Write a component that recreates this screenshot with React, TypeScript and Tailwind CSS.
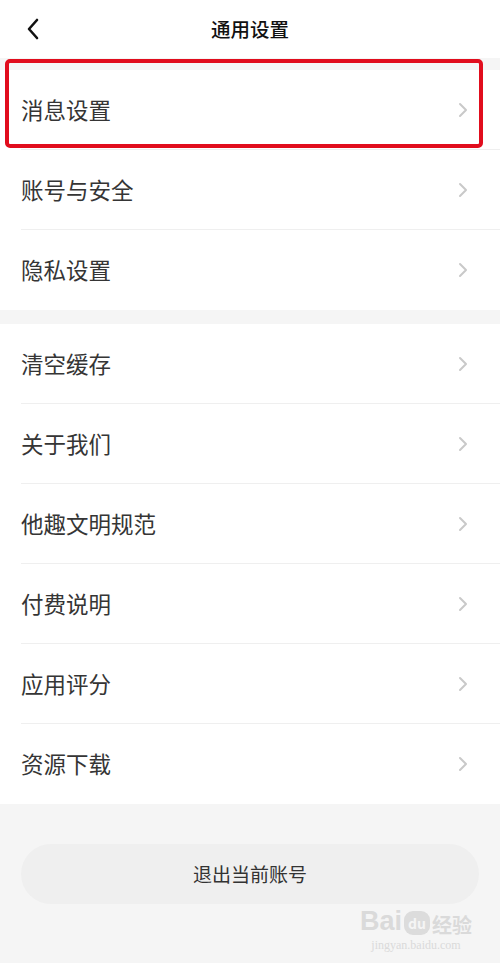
import React from "react";

const groupOne = ["消息设置", "账号与安全", "隐私设置"];
const groupTwo = ["清空缓存", "关于我们", "他趣文明规范", "付费说明", "应用评分", "资源下载"];

function Chevron() {
  return (
    <svg width="10" height="16" viewBox="0 0 10 16" fill="none">
      <path d="M2 2l6 6-6 6" stroke="#c9c9c9" strokeWidth="2" strokeLinecap="round" strokeLinejoin="round" />
    </svg>
  );
}

function Row({ label, last }: { label: string; last?: boolean }) {
  return (
    <div className="flex h-[80px] items-center pl-[21px]">
      <div
        className={
          "flex h-full flex-1 items-center justify-between pr-[32px] " +
          (last ? "" : "border-b border-[#efefef]")
        }
      >
        <span className="text-[22.5px] text-[#353535]">{label}</span>
        <Chevron />
      </div>
    </div>
  );
}

export default function App() {
  return (
    <div
      className="flex h-[963px] w-[500px] flex-col overflow-hidden bg-[#f5f5f5]"
      style={{ fontFamily: '"Noto Sans CJK SC", "Noto Sans", sans-serif' }}
    >
      {/* header */}
      <div className="relative flex h-[58px] items-center justify-center bg-white">
        <svg className="absolute left-[26px] top-[17px]" width="16" height="24" viewBox="0 0 16 24" fill="none">
          <path d="M11 3L3 12l8 9" stroke="#111111" strokeWidth="2.6" strokeLinecap="round" strokeLinejoin="round" />
        </svg>
        <h1 className="text-[19.5px] font-medium text-[#111111]">通用设置</h1>
      </div>

      <div className="mt-[12px] bg-white">
        {groupOne.map((item, i) => (
          <div key={item} className="relative">
            <Row label={item} last={i === groupOne.length - 1} />
            {i === 0 && (
              <div className="pointer-events-none absolute -top-[11px] bottom-[2px] left-[5px] right-[17px] rounded-[5px] border-[4px] border-[#e10d1d]" />
            )}
          </div>
        ))}
      </div>

      <div className="mt-[14px] bg-white">
        {groupTwo.map((item, i) => (
          <Row key={item} label={item} last={i === groupTwo.length - 1} />
        ))}
      </div>

      <div className="relative flex-1">
        <div className="mx-[21px] mt-[40px] flex h-[60px] items-center justify-center rounded-full bg-[#efefef]">
          <span className="text-[19px] text-[#333333]">退出当前账号</span>
        </div>

        {/* watermark */}
        <div className="absolute bottom-[12px] right-[28px] flex flex-col items-center text-[#dadada]">
          <div className="flex items-end gap-[2px]">
            <span className="text-[27px] font-bold leading-none" style={{ fontFamily: '"Liberation Sans", sans-serif' }}>
              Bai
            </span>
            <span className="flex h-[24px] w-[26px] items-center justify-center rounded-[9px] bg-[#dcdcdc] text-[14px] font-bold leading-none text-[#f5f5f5]">
              du
            </span>
            <span className="text-[20px] font-bold leading-none">经验</span>
          </div>
          <span className="mt-[4px] text-[12px] leading-none" style={{ fontFamily: '"Liberation Serif", serif' }}>
            jingyan.baidu.com
          </span>
        </div>
      </div>
    </div>
  );
}
